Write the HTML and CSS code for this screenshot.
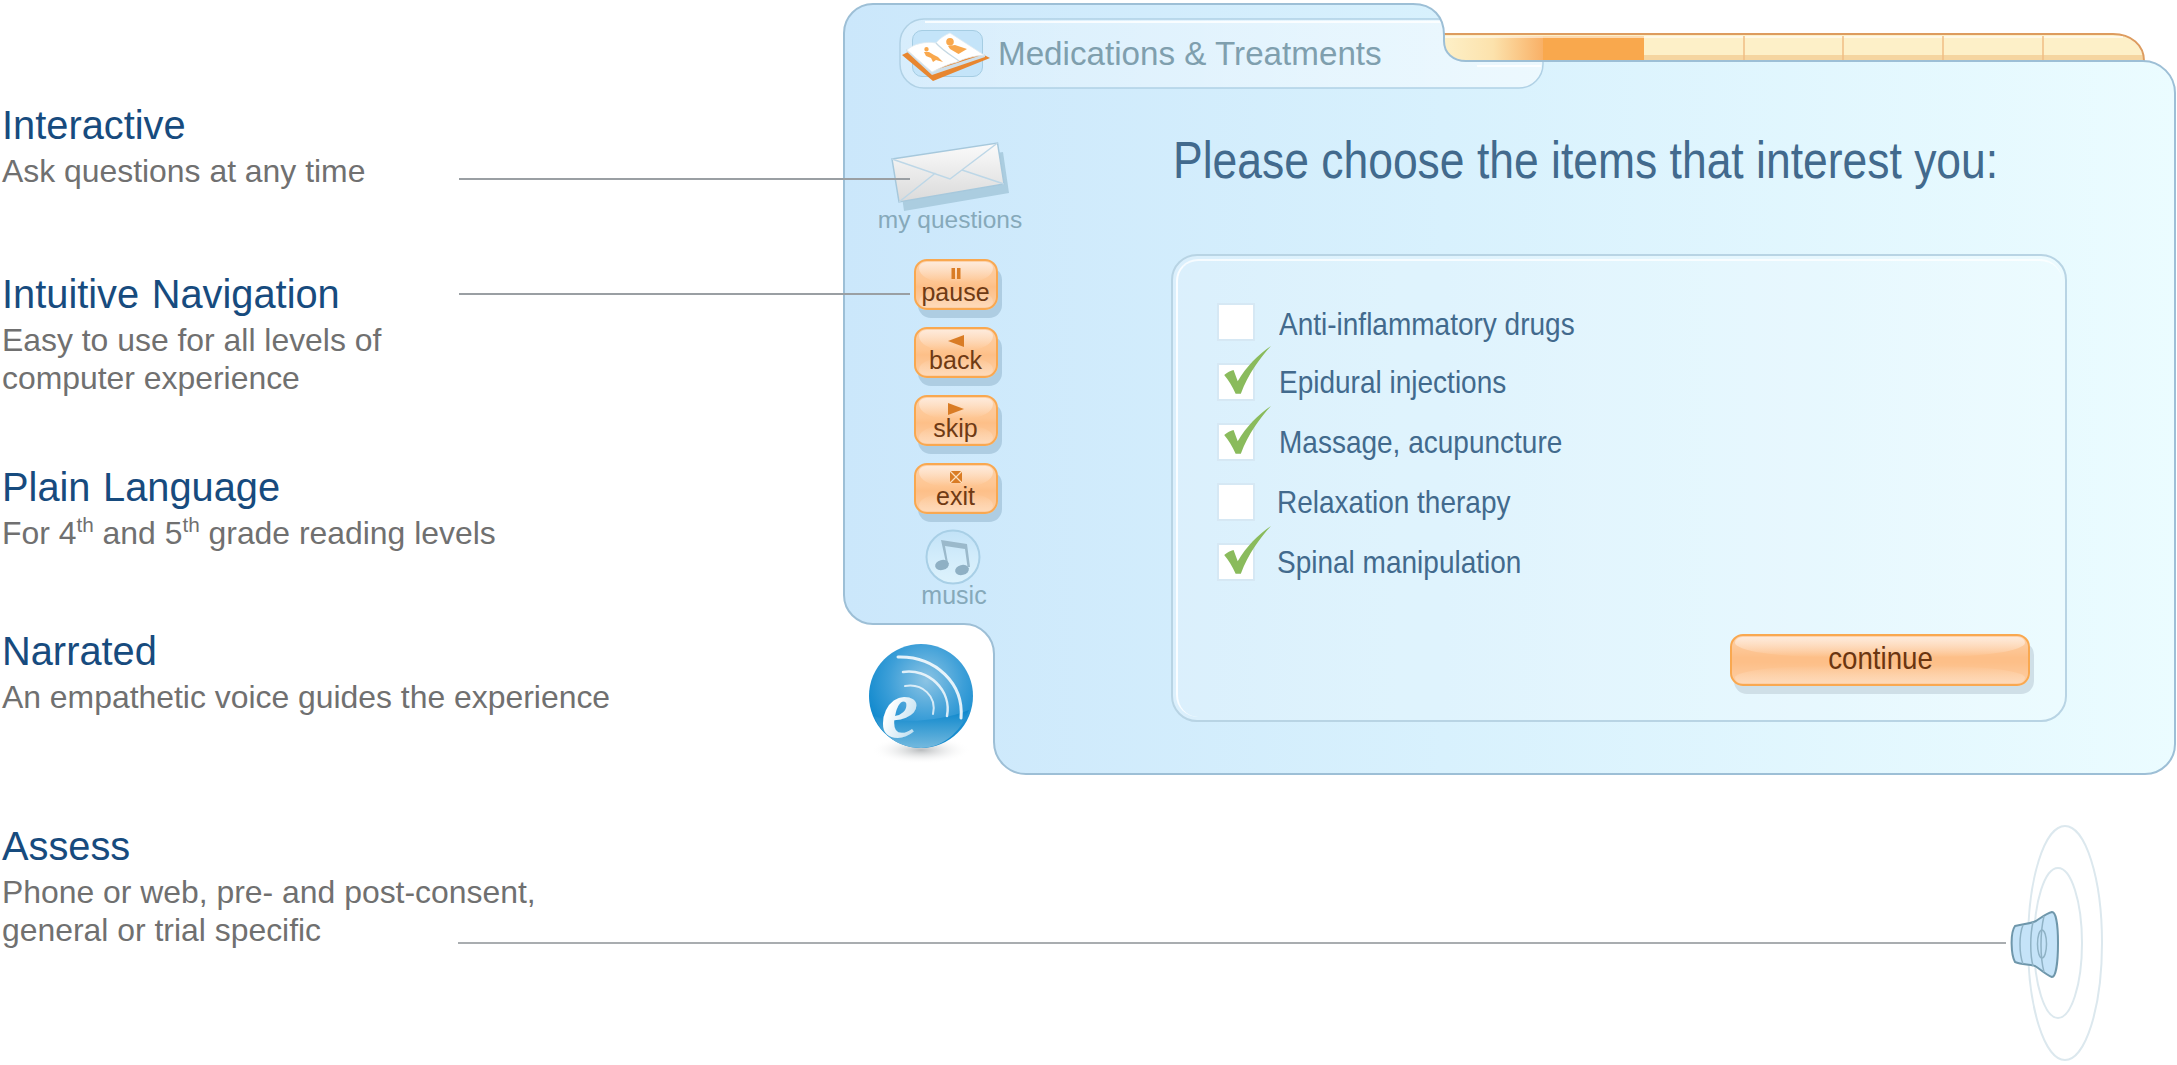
FILE: index.html
```html
<!DOCTYPE html>
<html lang="en">
<head>
<meta charset="utf-8">
<title>Medications &amp; Treatments</title>
<link rel="stylesheet" href="styles.css">
</head>
<body>
<div class="page">
  <section class="features">
    <div class="feature">
      <h2>Interactive</h2>
      <p>Ask questions at any time</p>
    </div>
    <div class="feature">
      <h2>Intuitive Navigation</h2>
      <p>Easy to use for all levels of<br>computer experience</p>
    </div>
    <div class="feature">
      <h2>Plain Language</h2>
      <p>For 4<sup>th</sup> and 5<sup>th</sup> grade reading levels</p>
    </div>
    <div class="feature">
      <h2>Narrated</h2>
      <p>An empathetic voice guides the experience</p>
    </div>
    <div class="feature">
      <h2>Assess</h2>
      <p>Phone or web, pre- and post-consent,<br>general or trial specific</p>
    </div>
  </section>

  <section class="window">
    <svg class="backdrop" width="1334" height="772" viewBox="0 0 1334 772" aria-hidden="true">
      <defs>
        <linearGradient id="panelFill" gradientUnits="userSpaceOnUse" x1="0" y1="0" x2="1334" y2="0">
          <stop offset="0" stop-color="#cbe7fb"/>
          <stop offset=".45" stop-color="#d8f1fd"/>
          <stop offset="1" stop-color="#ebfcff"/>
        </linearGradient>
        <linearGradient id="tabFill" x1="0" y1="0" x2="1" y2="0">
          <stop offset="0" stop-color="#fff" stop-opacity=".22"/>
          <stop offset="1" stop-color="#fff" stop-opacity=".5"/>
        </linearGradient>
        <linearGradient id="stripFade" x1="0" y1="0" x2="1" y2="0">
          <stop offset="0" stop-color="#fdf0c8"/>
          <stop offset=".5" stop-color="#fce2ac"/>
          <stop offset="1" stop-color="#f9b066"/>
        </linearGradient>
        <clipPath id="panelClip">
          <path d="M1 30A29 29 0 0 1 30 1H570C590 1 601 14 601 32V38C601 50 610 58 623 58H1300A32 32 0 0 1 1332 90V741A30 30 0 0 1 1302 771H183A32 32 0 0 1 151 739V651A30 30 0 0 0 121 621H30A29 29 0 0 1 1 592Z"/>
        </clipPath>
      </defs>
      <path class="strip-base" d="M595 31H1270A31 31 0 0 1 1301 58H595Z"/>
      <rect class="strip-fade" x="600" y="33" width="100" height="25"/>
      <rect class="strip-on" x="700" y="33" width="101" height="24"/>
      <rect class="strip-band" x="801" y="52" width="499" height="6"/>
      <path class="strip-line" d="M595 31H1270C1288 31 1301 42 1301 58"/>
      <path class="strip-light" d="M600 34H1280"/>
      <path class="strip-div" d="M901 33V58M1000 33V58M1100 33V58M1200 33V58"/>
      <path class="panel-fill" d="M1 30A29 29 0 0 1 30 1H570C590 1 601 14 601 32V38C601 50 610 58 623 58H1300A32 32 0 0 1 1332 90V741A30 30 0 0 1 1302 771H183A32 32 0 0 1 151 739V651A30 30 0 0 0 121 621H30A29 29 0 0 1 1 592Z"/>
      <g clip-path="url(#panelClip)">
        <rect class="tab" x="57" y="16" width="643" height="69" rx="24"/>
        <path class="tab-light" d="M82 19H598M634 63H698"/>
      </g>
      <path class="panel-line" d="M1 30A29 29 0 0 1 30 1H570C590 1 601 14 601 32V38C601 50 610 58 623 58H1300A32 32 0 0 1 1332 90V741A30 30 0 0 1 1302 771H183A32 32 0 0 1 151 739V651A30 30 0 0 0 121 621H30A29 29 0 0 1 1 592Z"/>
    </svg>

    <header class="tab-row">
      <div class="book-holder">
        <svg class="book" width="90" height="54" viewBox="0 0 90 54" aria-hidden="true">
          <path class="book-base" d="M2 27L33 53L90 30L70 20L20 18Z"/>
          <path class="book-edge" d="M6 23L32 47L85 29V26L32 43L6 21Z"/>
          <path class="book-page" d="M7 22C13 16 26 13 36 15C40 10 45 7 50 5L84 27C73 28 63 31 57 34C48 36 40 40 32 44Z"/>
          <path class="book-fold" d="M36 15C42 22 52 28 59 33"/>
          <path class="book-figure" d="M26.500 19a2.200 2.200 0 1 1 0 4.400a2.200 2.200 0 1 1 0-4.400ZM24 24L29 24L34 27L38 29L43 34L36 32L33 34L31 30L26 28Z"/>
          <path class="book-figure" d="M50 10a3.800 3.800 0 1 1 0 7.600a3.800 3.800 0 1 1 0-7.600ZM48 18L55 17L67 21L58.500 26L50 21Z"/>
        </svg>
      </div>
      <h1 class="tab-title">Medications &amp; Treatments</h1>
    </header>

    <div class="body">
      <nav class="sidebar">
        <svg class="envelope" width="120" height="72" viewBox="0 0 120 72" aria-hidden="true">
          <defs>
            <linearGradient id="envFill" x1="0" y1="0" x2="0" y2="1">
              <stop offset="0" stop-color="#fbfbfb"/>
              <stop offset="1" stop-color="#dadada"/>
            </linearGradient>
          </defs>
          <path class="env-shadow" d="M9 28L114 12L120 53L15 71Z"/>
          <path class="env-body" d="M3 19L108.500 3L115 44L10 62Z"/>
          <path class="env-lines" d="M3 19L61 39L108.500 3M10 62L46.500 33M115 44L73 30"/>
        </svg>
        <span class="side-label side-questions">my questions</span>

        <div class="controls">
          <a class="btn">
            <svg class="btn-icon" width="16" height="12" viewBox="0 0 16 12" aria-hidden="true"><path d="M3.500 1H7V12H3.500ZM9 1H12.500V12H9Z"/></svg>
            <span>pause</span>
          </a>
          <a class="btn">
            <svg class="btn-icon" width="16" height="12" viewBox="0 0 16 12" aria-hidden="true"><path d="M16 0V12L0 6Z"/></svg>
            <span>back</span>
          </a>
          <a class="btn">
            <svg class="btn-icon" width="16" height="12" viewBox="0 0 16 12" aria-hidden="true"><path d="M0 0V12L16 6Z"/></svg>
            <span>skip</span>
          </a>
          <a class="btn">
            <svg class="btn-icon" width="16" height="12" viewBox="0 0 16 14" aria-hidden="true"><path d="M1 0H15V14H1Z"/><path class="x" d="M1 0L15 14M15 0L1 14"/></svg>
            <span>exit</span>
          </a>
        </div>

        <svg class="music" width="56" height="56" viewBox="0 0 56 56" aria-hidden="true">
          <defs>
            <linearGradient id="musicFill" x1="0" y1="0" x2="0" y2="1">
              <stop offset="0" stop-color="#c2e2f7"/>
              <stop offset=".5" stop-color="#d2ecfb"/>
              <stop offset="1" stop-color="#ddf2fc"/>
            </linearGradient>
          </defs>
          <circle class="music-disc" cx="28" cy="28" r="26.500"/>
          <path class="music-stem" d="M16 11L42 15L45 38L42.500 38L40 20L20 17L23 34L21 34Z"/>
          <ellipse class="music-note" cx="17" cy="36" rx="7" ry="5" transform="rotate(-15 17 36)"/>
          <ellipse class="music-note" cx="37" cy="41" rx="7" ry="5" transform="rotate(-15 37 41)"/>
        </svg>
        <span class="side-label side-music">music</span>

        <svg class="logo" width="115" height="122" viewBox="0 0 115 122" aria-hidden="true">
          <defs>
            <radialGradient id="logoBall" cx=".55" cy=".35" r=".65">
              <stop offset="0" stop-color="#8cc4e4"/>
              <stop offset=".55" stop-color="#3d9fd8"/>
              <stop offset="1" stop-color="#0a86cc"/>
            </radialGradient>
            <linearGradient id="logoLow" x1="0" y1="0" x2="0" y2="1">
              <stop offset="0" stop-color="#0a86cc"/>
              <stop offset="1" stop-color="#74b9de"/>
            </linearGradient>
            <radialGradient id="logoShade">
              <stop offset="0" stop-color="#b9bcbe"/>
              <stop offset="1" stop-color="#fff" stop-opacity="0"/>
            </radialGradient>
            <linearGradient id="logoE" x1="0" y1="0" x2="1" y2="1">
              <stop offset=".35" stop-color="#fff"/>
              <stop offset="1" stop-color="#a5d2ea"/>
            </linearGradient>
          </defs>
          <ellipse cx="53" cy="106" rx="50" ry="14" fill="url(#logoShade)"/>
          <circle cx="53" cy="52" r="52" fill="url(#logoBall)"/>
          <path d="M6 72C30 80 72 78 101 66C92 90 73 104 53 104C32 104 14 92 6 72Z" fill="url(#logoLow)"/>
          <path class="logo-arc a1" d="M30 13C68 12 96 40 93 74"/>
          <path class="logo-arc a2" d="M35 28C60 24 84 46 79 72"/>
          <path class="logo-arc a3" d="M37 42C54 39 69 52 65 70"/>
          <text class="logo-e" x="13" y="93">e</text>
        </svg>
      </nav>

      <main class="content">
        <h2 class="question"><span class="squeeze-q">Please choose the items that interest you:</span></h2>
        <form class="choices">
          <ul class="options">
            <li class="option">
              <span class="check"></span>
              <span class="opt-text opt-low">Anti-inflammatory drugs</span>
            </li>
            <li class="option">
              <span class="check"><svg class="tick" width="52" height="52" viewBox="0 0 50 50" aria-hidden="true"><path d="M5 28C8 25 11 24 14 23L18 34C26 20 38 8 50 0C39 12 28 27 21 46L16 46C13 39 9 33 5 28Z"/></svg></span>
              <span class="opt-text">Epidural injections</span>
            </li>
            <li class="option">
              <span class="check"><svg class="tick" width="52" height="52" viewBox="0 0 50 50" aria-hidden="true"><path d="M5 28C8 25 11 24 14 23L18 34C26 20 38 8 50 0C39 12 28 27 21 46L16 46C13 39 9 33 5 28Z"/></svg></span>
              <span class="opt-text">Massage, acupuncture</span>
            </li>
            <li class="option">
              <span class="check"></span>
              <span class="opt-text opt-tight">Relaxation therapy</span>
            </li>
            <li class="option">
              <span class="check"><svg class="tick" width="52" height="52" viewBox="0 0 50 50" aria-hidden="true"><path d="M5 28C8 25 11 24 14 23L18 34C26 20 38 8 50 0C39 12 28 27 21 46L16 46C13 39 9 33 5 28Z"/></svg></span>
              <span class="opt-text opt-tight">Spinal manipulation</span>
            </li>
          </ul>
          <div class="actions">
            <a class="continue"><span>continue</span></a>
          </div>
        </form>
      </main>
    </div>
  </section>

  <i class="connector connector-questions"></i>
  <i class="connector connector-pause"></i>
  <i class="connector connector-assess"></i>

  <svg class="speaker" width="110" height="240" viewBox="0 0 110 240" aria-hidden="true">
    <ellipse class="wave" cx="65" cy="118" rx="37" ry="117"/>
    <ellipse class="wave" cx="58" cy="118" rx="24" ry="75"/>
    <path class="cone" d="M15 101C22 99 30 99 36 96C42 92 47 88 52 87C56 87 58 100 58 118C58 136 56 152 52 152C46 150 40 144 35 141C29 139 22 140 15 137C11 130 10 108 15 101Z"/>
    <path class="cone-ring" d="M23 100C19 110 19 128 23 139M33 97C30 110 30 130 33 141M44 91C40 108 40 132 44 147"/>
    <ellipse class="cone-ring" cx="42" cy="119" rx="4.500" ry="14"/>
  </svg>
</div>
</body>
</html>
```

FILE: styles.css
```css
* { box-sizing: border-box; }
html, body { margin: 0; padding: 0; background: #fff; }
body { font-family: "Liberation Sans", Arial, sans-serif; overflow: hidden; }
h1, h2, p, ul { margin: 0; padding: 0; font-weight: normal; }
ul { list-style: none; }

.page { position: relative; display: flex; width: 2177px; height: 1065px; }

/* left column */
.features {
  width: 843px;
  flex: none;
  padding: 102px 0 0 2px;
  display: grid;
  grid-template-rows: 169px 193px 164px 195px auto;
  align-content: start;
}
.feature h2 { font-size: 39.800px; line-height: 46px; word-spacing: 1.500px; color: #174b7e; }
.feature p { margin-top: 5px; font-size: 31.900px; line-height: 37.500px; color: #707070; }
.feature sup { font-size: .65em; line-height: 0; vertical-align: .58em; }

/* application window */
.window { position: relative; width: 1334px; height: 772px; margin-top: 3px; flex: none; }
.backdrop { position: absolute; left: 0; top: 0; }
.strip-base { fill: #fdf0c8; }
.strip-fade { fill: url(#stripFade); }
.strip-on { fill: #f9a84d; }
.strip-band { fill: #f5d5a0; }
.strip-line { fill: none; stroke: #dd9c5f; stroke-width: 2; }
.strip-light { fill: none; stroke: #fff; stroke-width: 1.500; opacity: .75; }
.strip-div { fill: none; stroke: #efbd84; stroke-width: 1.500; }
.panel-fill { fill: url(#panelFill); }
.panel-line { fill: none; stroke: #9dbfd6; stroke-width: 2; }
.tab { fill: url(#tabFill); stroke: #b0d1e5; stroke-width: 1.500; }
.tab-light { fill: none; stroke: #fff; stroke-width: 2; opacity: .8; }

.tab-row { position: relative; display: flex; align-items: flex-start; height: 97px; padding: 25px 0 0 57px; }
.book-holder { width: 98px; height: 54px; flex: none; }
.book-holder::before {
  content: "";
  position: absolute;
  left: 69px; top: 27px;
  width: 69px; height: 45px;
  border: 1.500px solid #a5cde3;
  border-radius: 10px;
  background: #c4e4f9;
}
.book { position: relative; display: block; }
.book-base { fill: #e8862f; }
.book-edge { fill: #cfdfe9; }
.book-page { fill: #fff; stroke: #e2ecf2; stroke-width: .8; }
.book-fold { fill: none; stroke: #c6d9e4; stroke-width: 1.200; }
.book-figure { fill: #f9a84d; }
.tab-title { font-size: 33.200px; line-height: 38px; padding-top: 7px; color: #7f9fae; }

.body { position: relative; display: flex; }

/* sidebar */
.sidebar { width: 222px; flex: none; padding-top: 40px; display: flex; flex-direction: column; align-items: center; }
.envelope { display: block; margin-left: -10px; }
.env-shadow { fill: #abcde0; }
.env-body { fill: url(#envFill); stroke: #a6c8dc; stroke-width: 1.500; }
.env-lines { fill: none; stroke: #bdd7e7; stroke-width: 1.500; }
.side-label { color: #86a9ba; font-size: 24.500px; line-height: 26px; }
.side-questions { margin-top: -5px; margin-right: 8px; }
.side-music { font-size: 25px; line-height: 24px; margin-top: -2px; }

.controls { margin: 26px 0 0 3px; display: flex; flex-direction: column; gap: 17px; }
.btn {
  position: relative;
  display: flex;
  flex-direction: column;
  align-items: center;
  width: 84px;
  height: 51px;
  padding-top: 6px;
  border: 2px solid #f9a850;
  border-radius: 13px;
  background: linear-gradient(#fdd2ab 0, #fec591 45%, #fdbf88 55%, #fdcfa6 100%);
  box-shadow: 4px 8px 0 #aecde2;
  color: #6f3a14;
  font-size: 25px;
  line-height: 24px;
}
.btn::before, .continue::before {
  content: "";
  position: absolute;
  left: 3px; right: 3px; top: 1px;
  height: 42%;
  border-radius: 10px 10px 45% 45% / 8px 8px 100% 100%;
  background: linear-gradient(#feeada, rgba(253, 197, 145, .1));
}
.btn::after, .continue::after {
  content: "";
  position: absolute;
  left: 3px; right: 3px; bottom: 1px;
  height: 36%;
  border-radius: 45% 45% 10px 10px / 100% 100% 8px 8px;
  background: linear-gradient(rgba(253, 197, 145, .1), #fed9b8);
}
.btn span, .btn svg, .continue span { position: relative; z-index: 1; }
.btn-icon { display: block; fill: #d97c25; flex: none; }
.btn-icon .x { fill: none; stroke: #fde0c0; stroke-width: 1.500; }
.btn span { margin-top: 1px; }

.music { display: block; margin-top: 15px; margin-left: -2px; }
.music-disc { fill: url(#musicFill); stroke: #a8cfe6; stroke-width: 2; }
.music-stem { fill: #9bb9cb; }
.music-note { fill: #8fb0c4; }

.logo { display: block; align-self: flex-start; margin: 37px 0 0 25px; }
.logo-arc { fill: none; stroke: #fff; stroke-linecap: round; }
.a1 { stroke-width: 3; opacity: .85; }
.a2 { stroke-width: 2.500; opacity: .8; }
.a3 { stroke-width: 2; opacity: .75; }
.logo-e { font-family: "Liberation Serif", serif; font-style: italic; font-weight: bold; font-size: 84px; fill: url(#logoE); }

/* main */
.content { flex: 1; padding: 30px 0 0 106px; }
.question {
  padding-left: 2px;
  white-space: nowrap;
  font-size: 51.500px;
  line-height: 60px;
  color: #426a8d;
}
.squeeze-q { display: inline-block; transform: scaleX(.863); transform-origin: left center; }
.choices {
  position: relative;
  margin-top: 64px;
  width: 896px;
  height: 468px;
  padding: 47px 0 0 44px;
  display: flex;
  flex-direction: column;
  border: 2px solid #b8d4e4;
  border-radius: 26px;
  background: rgba(255, 255, 255, .2);
}
.choices::before {
  content: "";
  position: absolute;
  left: 3px; top: 3px; right: 3px; bottom: 3px;
  border-left: 2px solid rgba(255, 255, 255, .85);
  border-top: 2px solid rgba(255, 255, 255, .75);
  border-radius: 22px;
  pointer-events: none;
}
.options { display: flex; flex-direction: column; gap: 22px; }
.option { display: flex; align-items: center; height: 38px; }
.check { position: relative; width: 38px; height: 38px; flex: none; background: #fff; border: 2px solid #d6e8f4; }
.tick { position: absolute; left: 0; top: -19px; fill: #8abb5c; }
.opt-text {
  display: inline-block;
  margin-left: 24px;
  white-space: nowrap;
  font-size: 32px;
  line-height: 38px;
  color: #426a8d;
  transform: scaleX(.875);
  transform-origin: left center;
}
.opt-tight { margin-left: 22px; }
.opt-low { position: relative; top: 2px; }

.actions { margin-top: auto; padding: 0 0 34px 513px; }
.continue {
  position: relative;
  display: flex;
  align-items: center;
  justify-content: center;
  width: 300px;
  height: 52px;
  padding-bottom: 3px;
  border: 2px solid #f9a850;
  border-radius: 13px;
  background: linear-gradient(#fdd2ab 0, #fdbf88 45%, #fdbf88 55%, #fdcfa6 100%);
  box-shadow: 4px 8px 0 #cfdfe7;
  color: #6b3510;
  font-size: 32px;
}
.continue span { display: inline-block; transform: scaleX(.865); }

/* overlays */
.connector { position: absolute; display: block; height: 2px; background: #9a9fa3; }
.connector-questions { left: 459px; top: 178px; width: 451px; }
.connector-pause { left: 459px; top: 293px; width: 451px; }
.connector-assess { left: 458px; top: 942px; width: 1548px; background: #a9adb0; }

.speaker { position: absolute; left: 2000px; top: 825px; }
.wave { fill: none; stroke: #dce8ee; stroke-width: 2; }
.cone { fill: #c5e3f8; stroke: #6f97ab; stroke-width: 2; }
.cone-ring { fill: none; stroke: #8fb2c5; stroke-width: 1.500; }
```
